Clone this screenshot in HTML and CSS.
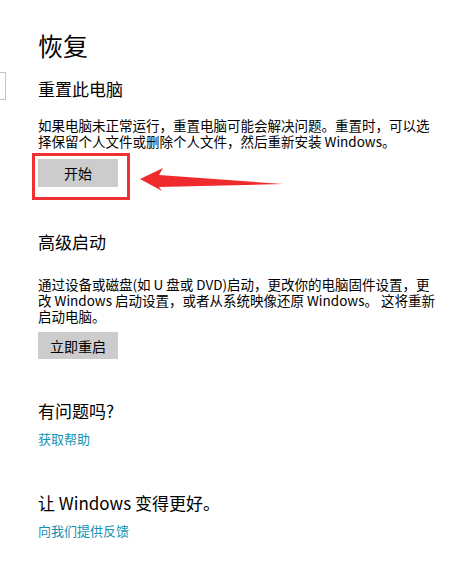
FILE: index.html
```html
<!DOCTYPE html>
<html lang="zh-CN">
<head>
    <meta charset="UTF-8">
    <title>恢复</title>
    <link rel="stylesheet" href="styles.css">
</head>
<body>
    <div class="edge"></div>
    <div class="page">
        <h1 class="title">恢复</h1>

        <h2 class="section-head first">重置此电脑</h2>
        <p class="desc first">如果电脑未正常运行，重置电脑可能会解决问题。重置时，可以选<br>择保留个人文件或删除个人文件，然后重新安装 Windows。</p>
        <button class="btn btn-start">开始</button>

        <h2 class="section-head">高级启动</h2>
        <p class="desc second">通过设备或磁盘(如 U 盘或 DVD)启动，更改你的电脑固件设置，更<br>改 Windows 启动设置，或者从系统映像还原 Windows。 这将重新<br>启动电脑。</p>
        <button class="btn btn-restart">立即重启</button>

        <h2 class="section-head help">有问题吗?</h2>
        <a class="link" href="#">获取帮助</a>

        <h2 class="section-head better">让 Windows 变得更好。</h2>
        <a class="link" href="#">向我们提供反馈</a>
    </div>

    <div class="mark-box"></div>
    <svg class="mark-arrow" width="150" height="30" viewBox="0 0 150 30">
        <polygon points="2,14 25,3 21,10 145,19 21,22 24,26" fill="#ef2b2d"/>
    </svg>
</body>
</html>
```

FILE: styles.css
```css
body {
    margin: 0;
    padding: 0;
    background: white;
    font-family: "Noto Sans CJK SC", "Noto Sans", sans-serif;
    color: #000;
}
.page {
    padding: 30px 0 0 38px;
    display: flex;
    flex-direction: column;
    align-items: flex-start;
}
.title {
    font-size: 25px;
    line-height: 30px;
    font-weight: normal;
    margin: 0;
}
.section-head {
    font-size: 17px;
    line-height: 24px;
    font-weight: normal;
    margin: 43px 0 0 0;
}
.section-head.first {
    margin-top: 16.5px;
}
.section-head.help {
    margin-top: 39.5px;
}
.section-head.better {
    margin-top: 44.5px;
}
.desc {
    font-size: 13.5px;
    line-height: 16px;
    white-space: nowrap;
    margin: 0;
}
.desc.first {
    margin-top: 16.5px;
}
.desc.second {
    margin-top: 21.5px;
}
.btn {
    font-family: inherit;
    font-size: 14px;
    background: #cccccc;
    border: none;
    width: 80px;
    height: 28px;
    padding: 0;
    color: #000;
}
.btn-start {
    margin-top: 10px;
}
.btn-restart {
    margin-top: 8.5px;
    height: 27px;
}
.link {
    font-size: 13px;
    line-height: 16px;
    color: #1592b2;
    text-decoration: none;
    margin-top: 8px;
}
.mark-box {
    position: absolute;
    left: 32px;
    top: 153px;
    width: 92px;
    height: 41px;
    border: 3px solid #ef3136;
}
.mark-arrow {
    position: absolute;
    left: 138px;
    top: 165px;
}
.edge {
    position: absolute;
    left: -3px;
    top: 72px;
    width: 7px;
    height: 26px;
    border: 1px solid #c4c4c4;
}
```
